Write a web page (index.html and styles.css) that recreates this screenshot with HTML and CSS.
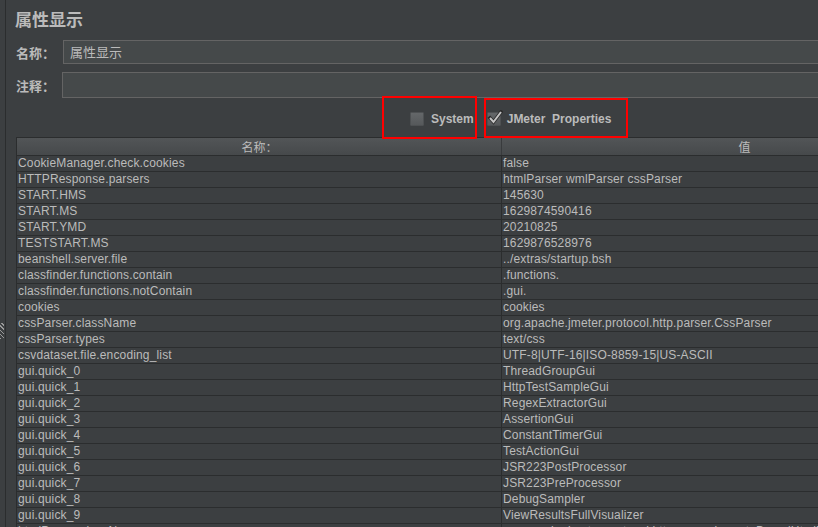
FILE: index.html
```html
<!DOCTYPE html>
<html lang="zh">
<head>
<meta charset="utf-8">
<title>属性显示</title>
<link rel="stylesheet" href="styles.css">
</head>
<body>
<div class="app">
  <div class="gutter"><div class="grip"></div></div>
  <div class="divider"></div>
  <div class="panel">
    <h1 class="title">属性显示</h1>
    <div class="field-row">
      <label class="field-label">名称：</label>
      <div class="field">属性显示</div>
    </div>
    <div class="field-row field-row-2">
      <label class="field-label">注释：</label>
      <div class="field field-tall"></div>
    </div>
    <div class="checks">
      <span class="check check-system"><span class="box"></span><span class="check-text">System</span></span>
      <span class="check check-jmeter"><span class="box"><svg class="tick" viewBox="0 0 16 16" width="16" height="16"><path d="M3 8 L6.5 12 L14 2" fill="none" stroke="#2b2b2b" stroke-width="3.6" stroke-linecap="square"/><path d="M3 8 L6.5 12 L14 2" fill="none" stroke="#c4c4c4" stroke-width="2"/></svg></span><span class="check-text">JMeter  Properties</span></span>
    </div>
    <div class="table">
      <div class="row head"><div class="cell">名称：</div><div class="cell">值</div></div>
      <div class="row"><div class="cell">CookieManager.check.cookies</div><div class="cell">false</div></div>
      <div class="row"><div class="cell">HTTPResponse.parsers</div><div class="cell">htmlParser wmlParser cssParser</div></div>
      <div class="row"><div class="cell">START.HMS</div><div class="cell">145630</div></div>
      <div class="row"><div class="cell">START.MS</div><div class="cell">1629874590416</div></div>
      <div class="row"><div class="cell">START.YMD</div><div class="cell">20210825</div></div>
      <div class="row"><div class="cell">TESTSTART.MS</div><div class="cell">1629876528976</div></div>
      <div class="row"><div class="cell">beanshell.server.file</div><div class="cell">../extras/startup.bsh</div></div>
      <div class="row"><div class="cell">classfinder.functions.contain</div><div class="cell">.functions.</div></div>
      <div class="row"><div class="cell">classfinder.functions.notContain</div><div class="cell">.gui.</div></div>
      <div class="row"><div class="cell">cookies</div><div class="cell">cookies</div></div>
      <div class="row"><div class="cell">cssParser.className</div><div class="cell">org.apache.jmeter.protocol.http.parser.CssParser</div></div>
      <div class="row"><div class="cell">cssParser.types</div><div class="cell">text/css</div></div>
      <div class="row"><div class="cell">csvdataset.file.encoding_list</div><div class="cell">UTF-8|UTF-16|ISO-8859-15|US-ASCII</div></div>
      <div class="row"><div class="cell">gui.quick_0</div><div class="cell">ThreadGroupGui</div></div>
      <div class="row"><div class="cell">gui.quick_1</div><div class="cell">HttpTestSampleGui</div></div>
      <div class="row"><div class="cell">gui.quick_2</div><div class="cell">RegexExtractorGui</div></div>
      <div class="row"><div class="cell">gui.quick_3</div><div class="cell">AssertionGui</div></div>
      <div class="row"><div class="cell">gui.quick_4</div><div class="cell">ConstantTimerGui</div></div>
      <div class="row"><div class="cell">gui.quick_5</div><div class="cell">TestActionGui</div></div>
      <div class="row"><div class="cell">gui.quick_6</div><div class="cell">JSR223PostProcessor</div></div>
      <div class="row"><div class="cell">gui.quick_7</div><div class="cell">JSR223PreProcessor</div></div>
      <div class="row"><div class="cell">gui.quick_8</div><div class="cell">DebugSampler</div></div>
      <div class="row"><div class="cell">gui.quick_9</div><div class="cell">ViewResultsFullVisualizer</div></div>
      <div class="row"><div class="cell">htmlParser.className</div><div class="cell">org.apache.jmeter.protocol.http.parser.LagartoBasedHtmlParser</div></div>
    </div>
  </div>
</div>
<div class="mark mark-1"></div>
<div class="mark mark-2"></div>
</body>
</html>
```
FILE: styles.css
```css
html, body {
  margin: 0;
  padding: 0;
  background: #3c3f41;
  overflow: hidden;
  width: 818px;
  height: 527px;
}
body {
  position: relative;
  font-family: "Liberation Sans", Arial, "Noto Sans CJK SC", sans-serif;
  color: #bbbbbb;
}
.app {
  display: flex;
  height: 527px;
}
.gutter {
  width: 5px;
  flex: none;
  display: flex;
  flex-direction: column;
}
.grip {
  margin-top: 323px;
  width: 4px;
  height: 16px;
  background-image: repeating-linear-gradient(45deg, #9a9a9a 0 1px, transparent 1px 3px);
}
.divider {
  width: 1px;
  flex: none;
  background: #2b2d2e;
}
.panel {
  flex: none;
  width: 1100px;
  padding-left: 9px;
  box-sizing: border-box;
}
.title {
  margin: 0;
  padding-top: 8px;
  font-family: "Noto Sans CJK SC", sans-serif;
  font-size: 17px;
  line-height: 22px;
  font-weight: bold;
  color: #bbbbbb;
  height: 40px;
  box-sizing: border-box;
}
.field-row {
  display: flex;
  align-items: center;
  height: 24px;
}
.field-row-2 {
  margin-top: 8px;
  height: 26px;
}
.field-label {
  width: 48px;
  flex: none;
  font-family: "Noto Sans CJK SC", sans-serif;
  font-size: 13px;
  font-weight: bold;
  padding-left: 1px;
  box-sizing: border-box;
}
.field-row-2 .field-label {
  width: 47px;
}
.field {
  flex: 1;
  height: 24px;
  box-sizing: border-box;
  border: 1px solid #646464;
  background: #45494a;
  font-family: "Noto Sans CJK SC", sans-serif;
  font-size: 13px;
  line-height: 22px;
  padding-left: 6px;
}
.field-tall {
  height: 26px;
}
.checks {
  display: flex;
  align-items: center;
  height: 39px;
  padding-top: 3px;
  box-sizing: border-box;
  padding-left: 395px;
}
.check {
  display: flex;
  align-items: center;
}
.box {
  width: 14px;
  height: 14px;
  box-sizing: border-box;
  border: 1px solid #4e5153;
  background: linear-gradient(#646769, #56595b);
  border-radius: 1px;
  position: relative;
  flex: none;
}
.tick {
  position: absolute;
  left: -1px;
  top: -3px;
}
.check-text {
  font-size: 12px;
  font-weight: bold;
  white-space: pre;
  color: #bbbbbb;
}
.check-system .check-text {
  margin-left: 7px;
}
.check-jmeter {
  margin-left: 13px;
}
.check-jmeter .check-text {
  margin-left: 6px;
}
.table {
  margin-left: 1px;
  width: 971px;
  border-left: 1px solid #2b2d2e;
  border-top: 1px solid #2b2d2e;
}
.row {
  display: grid;
  grid-template-columns: 485px 484px;
  height: 16px;
  box-sizing: border-box;
  border-bottom: 1px solid #2b2d2e;
}
.cell {
  font-size: 12px;
  line-height: 15px;
  letter-spacing: 0.15px;
  padding-left: 1px;
  white-space: nowrap;
  overflow: hidden;
}
.row .cell:first-child {
  border-right: 1px solid #2b2d2e;
}
.row.head {
  height: 18px;
  background: linear-gradient(#525557, #46494b);
}
.row.head .cell {
  text-align: center;
  line-height: 17px;
  letter-spacing: 0;
  font-family: "Noto Sans CJK SC", sans-serif;
  font-size: 12px;
}
.row.head .cell:first-child {
  border-right-color: #393b3d;
}
.mark {
  position: absolute;
  border: 2px solid #ff0000;
  box-sizing: border-box;
}
.mark-1 {
  left: 382px;
  top: 96px;
  width: 95px;
  height: 43px;
}
.mark-2 {
  left: 484px;
  top: 98px;
  width: 144px;
  height: 40px;
}
```
